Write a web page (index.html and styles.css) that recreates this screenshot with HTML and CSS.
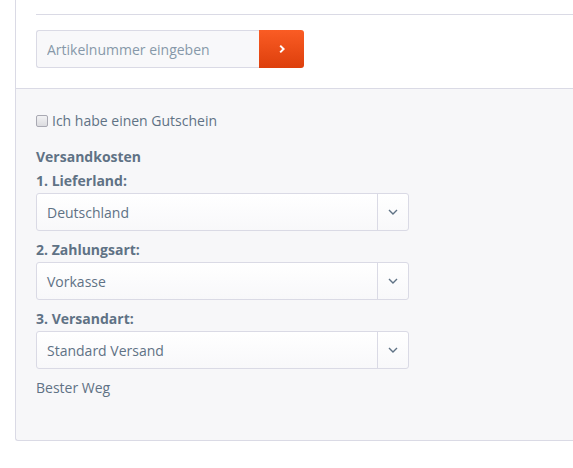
FILE: index.html
```html
<!DOCTYPE html>
<html lang="de">
<head>
<meta charset="utf-8">
<title>Warenkorb</title>
<link rel="stylesheet" href="styles.css">
</head>
<body>
<div class="panel">
  <div class="panel-top">
    <div class="add-article">
      <div class="input-group">
        <input class="article-input" type="text" placeholder="Artikelnummer eingeben">
        <button class="submit-btn" type="button" aria-label="Hinzufügen">
          <svg width="10" height="10" viewBox="0 0 10 10"><path d="M3.2 1.6 L6.6 5 L3.2 8.4" fill="none" stroke="#fff" stroke-width="2"/></svg>
        </button>
      </div>
    </div>
  </div>
  <div class="panel-body">
    <label class="voucher"><input type="checkbox" class="voucher-check"> Ich habe einen Gutschein</label>
    <div class="shipping">
      <div class="shipping-title">Versandkosten</div>
      <div class="field-label">1. Lieferland:</div>
      <div class="select">
        <span class="select-value">Deutschland</span>
        <span class="select-arrow"><svg width="10" height="6" viewBox="0 0 10 6"><path d="M1 1 L5 5 L9 1" fill="none" stroke="#5f7285" stroke-width="1.4"/></svg></span>
      </div>
      <div class="field-label">2. Zahlungsart:</div>
      <div class="select">
        <span class="select-value">Vorkasse</span>
        <span class="select-arrow"><svg width="10" height="6" viewBox="0 0 10 6"><path d="M1 1 L5 5 L9 1" fill="none" stroke="#5f7285" stroke-width="1.4"/></svg></span>
      </div>
      <div class="field-label">3. Versandart:</div>
      <div class="select">
        <span class="select-value">Standard Versand</span>
        <span class="select-arrow"><svg width="10" height="6" viewBox="0 0 10 6"><path d="M1 1 L5 5 L9 1" fill="none" stroke="#5f7285" stroke-width="1.4"/></svg></span>
      </div>
      <div class="shipping-desc">Bester Weg</div>
    </div>
  </div>
</div>
</body>
</html>
```
FILE: styles.css
```css
html, body {
  margin: 0;
  padding: 0;
  background: #fff;
}
body {
  font-family: "Open Sans", "DejaVu Sans", sans-serif;
  font-size: 14px;
  color: #5f7285;
}
.panel {
  margin-left: 15px;
  border: 1px solid #dadae5;
  border-top: none;
  border-right: none;
  border-radius: 0 0 0 3px;
  background: #f7f7f9;
}
.panel-top {
  background: #fff;
  padding: 14px 0 20px 20px;
  border-bottom: 1px solid #dadae5;
}
.add-article {
  border-top: 1px solid #dadae5;
  padding-top: 15px;
}
.input-group {
  display: flex;
  height: 38px;
}
.article-input {
  box-sizing: border-box;
  width: 223px;
  height: 38px;
  margin: 0;
  border: 1px solid #dadae5;
  border-right: none;
  border-radius: 3px 0 0 3px;
  background: #f8f8fa;
  padding: 0 10px;
  font-family: inherit;
  font-size: 14px;
  color: #5f7285;
  outline: none;
}
.article-input::placeholder {
  color: #8798a9;
}
.submit-btn {
  box-sizing: border-box;
  width: 45px;
  height: 38px;
  margin: 0;
  border: none;
  border-radius: 0 3px 3px 0;
  background: linear-gradient(to bottom, #fa5c24 0%, #dd3f0c 100%);
  display: flex;
  align-items: center;
  justify-content: center;
  padding: 0;
}
.panel-body {
  padding: 20px 20px 40px 20px;
}
.voucher {
  display: flex;
  align-items: center;
  height: 24px;
  line-height: 24px;
  margin-bottom: 12px;
}
.voucher-check {
  -webkit-appearance: none;
  appearance: none;
  box-sizing: border-box;
  margin: 0 4px 0 0;
  width: 12px;
  height: 12px;
  border: 1px solid #a9a9b3;
  border-radius: 2px;
  background: linear-gradient(to bottom, #f2f2f4 0%, #dcdce0 100%);
}
.shipping-title,
.field-label {
  font-weight: 700;
  line-height: 24px;
}
.select {
  box-sizing: border-box;
  width: 373px;
  height: 38px;
  border: 1px solid #dadae5;
  border-radius: 3px;
  background: linear-gradient(to bottom, #fff 0%, #f8f8fa 100%);
  display: flex;
  align-items: stretch;
  margin-bottom: 7px;
}
.select-value {
  flex: 1;
  display: flex;
  align-items: center;
  padding-left: 10px;
  padding-top: 1px;
}
.select-arrow {
  width: 30px;
  border-left: 1px solid #dadae5;
  display: flex;
  align-items: center;
  justify-content: center;
}
.shipping-desc {
  line-height: 24px;
}
```
